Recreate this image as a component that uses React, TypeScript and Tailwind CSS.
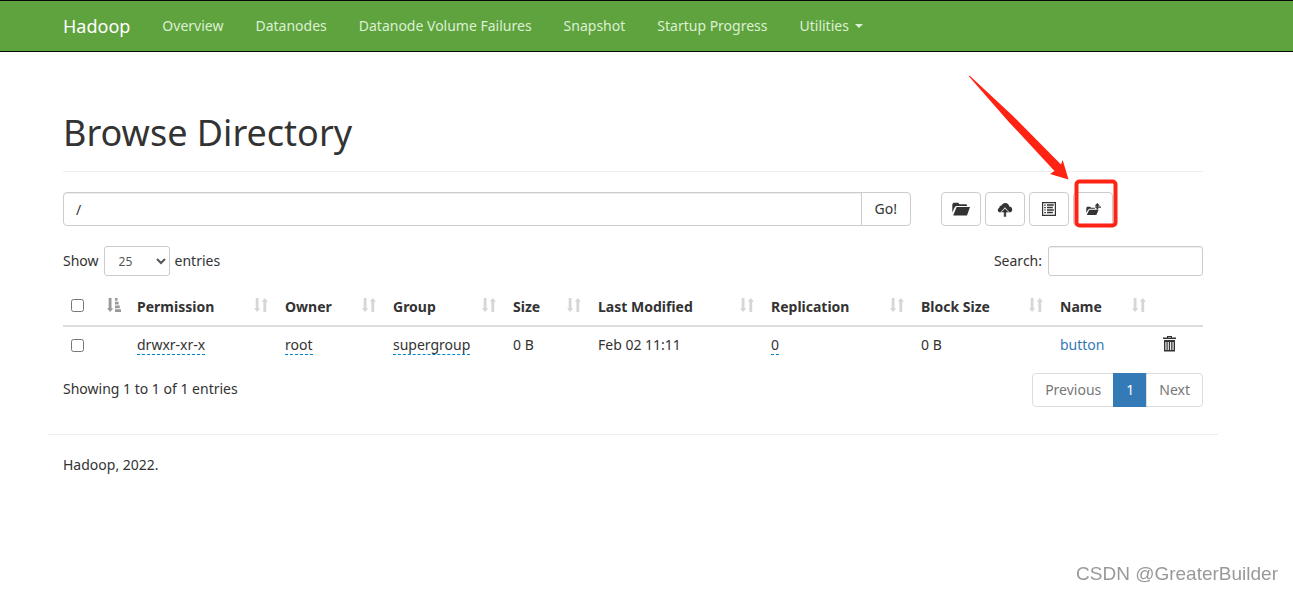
import type React from "react";

type Column = {
  label: string;
  width: string;
  sortable: boolean;
};

const NAV_LINKS = ["Overview", "Datanodes", "Datanode Volume Failures", "Snapshot", "Startup Progress"];

const COLUMNS: Column[] = [
  { label: "Permission", width: "w-[148px]", sortable: true },
  { label: "Owner", width: "w-[108px]", sortable: true },
  { label: "Group", width: "w-[120px]", sortable: true },
  { label: "Size", width: "w-[85px]", sortable: true },
  { label: "Last Modified", width: "w-[173px]", sortable: true },
  { label: "Replication", width: "w-[150px]", sortable: true },
  { label: "Block Size", width: "w-[139px]", sortable: true },
  { label: "Name", width: "w-[103px]", sortable: true },
  { label: "", width: "w-[48px]", sortable: false },
];

const FILES = [
  {
    permission: "drwxr-xr-x",
    owner: "root",
    group: "supergroup",
    size: "0 B",
    modified: "Feb 02 11:11",
    replication: "0",
    blockSize: "0 B",
    name: "button",
  },
];

function FolderOpenIcon() {
  return (
    <svg width="18" height="14" viewBox="0 0 18 14" fill="currentColor">
      <path d="M.3 10.5V2.600L1.300.8h5l1.200 1.400h6.900l1 1.800H4L2.600 5.400z" />
      <path d="M4.600 5H18l-3 8.400H1.200z" />
    </svg>
  );
}

function CloudUploadIcon() {
  return (
    <svg width="16" height="15" viewBox="0 0 16 15" fill="currentColor">
      <path d="M3.400 10.400C1.900 10.400.8 9.500.8 8.100c0-1.100.6-1.900 1.500-2.200C2.200 4.500 3.100 3.500 4.500 3.600 5.200 1.900 6.500.9 8.200.9c2.300 0 3.900 1.500 4 3.600 1.700 0 3 1.200 3 2.900 0 1.800-1.100 3-2.800 3L8 5.200z" />
      <path d="M8 6.200l4.300 4.400H9.300V15H6.700v-4.400h-3z" stroke="white" strokeWidth="0.500" />
    </svg>
  );
}

function ListAltIcon() {
  return (
    <svg width="14" height="14" viewBox="0 0 14 14" fill="currentColor">
      <path d="M0 0h14v14H0zM1.200 1.200v11.600h11.600V1.200z" fillRule="evenodd" />
      <path d="M2.200 2.500h1.600v1.300H2.200zM2.200 5h1.600v1.200H2.200zM2.200 7.400h1.600v1.200H2.200zM2.200 9.900h1.600v1.300H2.200z" />
      <path d="M5 2.300h6.800v1.500H5zM5 4.800h5.800v1.500H5zM5 7.300h6.800v1.500H5zM5 9.800h5.800v1.500H5z" />
    </svg>
  );
}

function FolderMoveIcon() {
  return (
    <svg width="15" height="13" viewBox="0 0 15 13" fill="currentColor">
      <path d="M.3 10V4.800l.9-1h3l.8.9h3.600l.6 1.100H3.200L1.900 7z" />
      <path d="M3.300 6.700h9.300L10.300 12H.8z" />
      <path d="M11.300 0l2.600 2.700h-1.700v.9H15v1.200h-2.800v1.600h-1.700V4.800H9.200V3.600h1.300v-.9H8.700z" />
    </svg>
  );
}

function TrashIcon() {
  return (
    <svg width="13" height="16" viewBox="0 0 13 16" fill="currentColor">
      <path d="M0 1.500h4V0h5v1.500h4V3H0zM5 .9v.6h3V.9z" fillRule="evenodd" />
      <path d="M1 4h11v11.500H1zM2.400 6v8h1.100V6zM4.700 6v8h1.100V6zM7.100 6v8h1.100V6zM9.500 6v8h1.100V6z" fillRule="evenodd" />
    </svg>
  );
}

function SortIcon() {
  return (
    <svg width="14" height="14" viewBox="0 0 14 14" fill="currentColor">
      <path d="M1.700 0h2.800v10.300h1.800L3.100 14 0 10.300h1.700z" />
      <path d="M9.400 14h2.800V3.700H14L10.800 0 7.700 3.700h1.700z" />
    </svg>
  );
}

function SortAscIcon() {
  return (
    <svg width="14" height="14" viewBox="0 0 14 14" fill="currentColor">
      <path d="M1.700 0h2.800v10.300h1.800L3.100 14 0 10.300h1.700z" />
      <path d="M8 0h2.500v2.700H8zM8 3.800h3.600v2.700H8zM8 7.600h4.800v2.600H8zM8 11.300h6V14H8z" />
    </svg>
  );
}

function ToolButton({ label, children }: { label: string; children: React.ReactNode }) {
  return (
    <button
      type="button"
      aria-label={label}
      className="flex h-[34px] w-10 items-center justify-center rounded border border-[#cccccc] bg-white"
    >
      {children}
    </button>
  );
}

function Editable({ children }: { children: React.ReactNode }) {
  return <span className="border-b border-dashed border-[#0088cc]">{children}</span>;
}

function Navbar() {
  return (
    <nav className="border-y border-[#080808] bg-[#5fa33e] pr-[75px] pl-12">
      <div className="mx-auto flex h-[50px] max-w-[1170px] items-center gap-8 px-[15px] text-[#dcf0d3]">
        <a href="#" className="text-lg leading-5 text-white">
          Hadoop
        </a>
        {NAV_LINKS.map((label) => (
          <a key={label} href="#">
            {label}
          </a>
        ))}
        <a href="#" className="flex items-center gap-1.5">
          Utilities
          <span className="border-x-4 border-t-4 border-x-transparent border-t-current" />
        </a>
      </div>
    </nav>
  );
}

function FileTable() {
  return (
    <table className="mt-[13px] w-full table-fixed border-collapse">
      <thead>
        <tr className="border-b-2 border-[#dddddd]">
          <th className="w-[66px] p-2">
            <div className="flex h-5 items-start justify-between">
              <input type="checkbox" aria-label="Select all" className="mt-0.5 h-[13px] w-[13px]" />
              <span className="pt-px text-[#999999]">
                <SortAscIcon />
              </span>
            </div>
          </th>
          {COLUMNS.map((col) => (
            <th key={col.label} className={`${col.width} py-2 pr-[9px] pl-2 text-left font-bold whitespace-nowrap`}>
              <div className="flex h-5 items-start justify-between">
                {col.label}
                {col.sortable && (
                  <span className="pt-px text-[#d6d6d6]">
                    <SortIcon />
                  </span>
                )}
              </div>
            </th>
          ))}
        </tr>
      </thead>
      <tbody>
        {FILES.map((file) => (
          <tr key={file.name} className="whitespace-nowrap">
            <td className="p-2">
              <input type="checkbox" aria-label={`Select ${file.name}`} className="block h-[13px] w-[13px]" />
            </td>
            <td className="p-2"><Editable>{file.permission}</Editable></td>
            <td className="p-2"><Editable>{file.owner}</Editable></td>
            <td className="p-2"><Editable>{file.group}</Editable></td>
            <td className="p-2">{file.size}</td>
            <td className="p-2">{file.modified}</td>
            <td className="p-2"><Editable>{file.replication}</Editable></td>
            <td className="p-2">{file.blockSize}</td>
            <td className="p-2">
              <a href="#" className="text-[#337ab7]">{file.name}</a>
            </td>
            <td className="p-2 align-top">
              <button type="button" aria-label="Delete" className="block pt-px">
                <TrashIcon />
              </button>
            </td>
          </tr>
        ))}
      </tbody>
    </table>
  );
}

// Red arrow and frame that point out the last toolbar button
function Marker() {
  return (
    <svg
      width="152"
      height="154"
      viewBox="0 0 152 154"
      className="pointer-events-none absolute -right-1.5 -bottom-0.5 max-w-none"
    >
      <path
        d="M1.800 2.200Q1.800 1.300 3 1.900L46 42 94 90.500 95.700 86 101.500 105.500 83 100 87.500 97 41 47z"
        fill="#ff2314"
      />
      <rect x="109.500" y="107.500" width="39" height="44" rx="3" fill="none" stroke="#ff2314" strokeWidth="4" />
    </svg>
  );
}

export default function App() {
  return (
    <div className="min-h-screen bg-white font-['Noto_Sans','Noto_Sans_CJK_SC',sans-serif] text-sm leading-5 text-[#333333]">
      <Navbar />
      <div className="pr-[75px] pl-12">
        <main className="mx-auto max-w-[1170px] px-[15px] pt-[61px]">
          <h1 className="border-b border-[#eeeeee] pb-[18px] text-4xl leading-10">Browse Directory</h1>

          <div className="mt-5 flex">
            <form className="flex flex-1">
              <input
                type="text"
                aria-label="Directory"
                defaultValue="/"
                className="h-[34px] min-w-0 flex-1 rounded-l border border-[#cccccc] px-3 shadow-[inset_0_1px_1px_rgba(0,0,0,0.075)]"
              />
              <button type="button" className="-ml-px h-[34px] rounded-r border border-[#cccccc] px-[13px]">
                Go!
              </button>
            </form>
            <div className="ml-[30px] flex w-[262px]">
              <div className="relative flex gap-1">
                <ToolButton label="Create directory"><FolderOpenIcon /></ToolButton>
                <ToolButton label="Upload files"><CloudUploadIcon /></ToolButton>
                <ToolButton label="Cut and paste"><ListAltIcon /></ToolButton>
                <ToolButton label="Parent directory"><FolderMoveIcon /></ToolButton>
                <Marker />
              </div>
            </div>
          </div>

          <div className="mt-5 flex items-center justify-between">
            <label className="flex items-center gap-[5px]">
              Show
              <select defaultValue="25" className="h-[30px] w-[66px] rounded-[3px] border border-[#cccccc] bg-white px-2.5 text-xs text-[#555555]">
                <option>25</option>
                <option>50</option>
                <option>100</option>
              </select>
              entries
            </label>
            <label className="flex items-center gap-1.5">
              Search:
              <input
                type="search"
                className="h-[30px] w-[155px] rounded-[3px] border border-[#cccccc] px-2.5 shadow-[inset_0_1px_1px_rgba(0,0,0,0.075)]"
              />
            </label>
          </div>

          <FileTable />

          <div className="mt-2.5 flex items-start justify-between">
            <p className="pt-1.5">Showing 1 to 1 of 1 entries</p>
            <div className="flex text-[#777777]">
              <button type="button" className="h-[34px] rounded-l border border-[#dddddd] px-3">Previous</button>
              <button type="button" className="-ml-px h-[34px] border border-[#337ab7] bg-[#337ab7] px-3 text-white">1</button>
              <button type="button" className="-ml-px h-[34px] rounded-r border border-[#dddddd] px-3">Next</button>
            </div>
          </div>
        </main>

        <footer className="mx-auto mt-[27px] max-w-[1170px] border-t border-[#eeeeee] px-[15px] pt-5">
          <p>Hadoop, 2022.</p>
        </footer>
      </div>
      <div className="fixed right-[15px] bottom-1 font-['Liberation_Sans',sans-serif] text-[19px] leading-6 text-[#999999]">
        CSDN @GreaterBuilder
      </div>
    </div>
  );
}
